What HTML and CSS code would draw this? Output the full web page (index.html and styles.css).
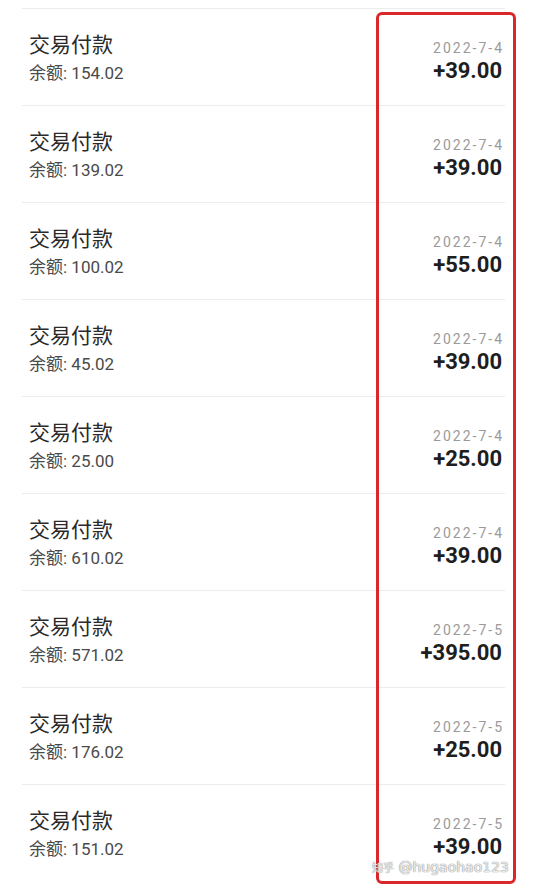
FILE: index.html
```html
<!DOCTYPE html>
<html lang="zh">
<head>
<meta charset="utf-8">
<link rel="stylesheet" href="styles.css">
</head>
<body>
<div class="page">
  <ul class="list">
    <li class="row"><div class="info"><div class="title">交易付款</div><div class="bal">余额: 154.02</div></div><div class="meta"><div class="date">2022-7-4</div><div class="amt">+39.00</div></div></li>
    <li class="row"><div class="info"><div class="title">交易付款</div><div class="bal">余额: 139.02</div></div><div class="meta"><div class="date">2022-7-4</div><div class="amt">+39.00</div></div></li>
    <li class="row"><div class="info"><div class="title">交易付款</div><div class="bal">余额: 100.02</div></div><div class="meta"><div class="date">2022-7-4</div><div class="amt">+55.00</div></div></li>
    <li class="row"><div class="info"><div class="title">交易付款</div><div class="bal">余额: 45.02</div></div><div class="meta"><div class="date">2022-7-4</div><div class="amt">+39.00</div></div></li>
    <li class="row"><div class="info"><div class="title">交易付款</div><div class="bal">余额: 25.00</div></div><div class="meta"><div class="date">2022-7-4</div><div class="amt">+25.00</div></div></li>
    <li class="row"><div class="info"><div class="title">交易付款</div><div class="bal">余额: 610.02</div></div><div class="meta"><div class="date">2022-7-4</div><div class="amt">+39.00</div></div></li>
    <li class="row"><div class="info"><div class="title">交易付款</div><div class="bal">余额: 571.02</div></div><div class="meta"><div class="date">2022-7-5</div><div class="amt">+395.00</div></div></li>
    <li class="row"><div class="info"><div class="title">交易付款</div><div class="bal">余额: 176.02</div></div><div class="meta"><div class="date">2022-7-5</div><div class="amt">+25.00</div></div></li>
    <li class="row"><div class="info"><div class="title">交易付款</div><div class="bal">余额: 151.02</div></div><div class="meta"><div class="date">2022-7-5</div><div class="amt">+39.00</div></div></li>
  </ul>
  <div class="highlight"></div>
  <div class="watermark"><span class="wm-logo">知乎</span> @hugaohao123</div>
</div>
</body>
</html>
```

FILE: styles.css
```css
html, body {
  margin: 0;
  padding: 0;
  background: #ffffff;
}
.page {
  position: relative;
  width: 546px;
  height: 888px;
  overflow: hidden;
  font-family: "Roboto", "Noto Sans CJK SC", sans-serif;
}
.list {
  list-style: none;
  margin: 0;
  padding: 8px 41px 0 22px;
}
.row {
  display: flex;
  justify-content: space-between;
  align-items: flex-start;
  height: 96px;
  border-top: 1px solid #ececec;
}
.info {
  padding: 20px 0 0 7px;
}
.title {
  font-family: "Noto Sans CJK SC", sans-serif;
  font-size: 21px;
  line-height: 29px;
  color: #2a2a2a;
}
.bal {
  font-family: "Roboto", "Noto Sans CJK SC", sans-serif;
  font-size: 17px;
  line-height: 22px;
  margin-top: 4px;
  color: #4a4a4a;
}
.meta {
  padding: 31px 3px 0 0;
  text-align: right;
}
.date {
  font-size: 14px;
  line-height: 16px;
  letter-spacing: 2px;
  color: #9a9a9a;
  margin-right: -2px;
}
.amt {
  font-size: 22px;
  line-height: 24px;
  font-weight: 700;
  color: #1e1e1e;
  margin-top: 3px;
}
.highlight {
  position: absolute;
  left: 376px;
  top: 12px;
  width: 134px;
  height: 866px;
  border: 3px solid #d9272c;
  border-radius: 6px;
}
.watermark {
  position: absolute;
  left: 372px;
  top: 859px;
  line-height: 16px;
  font-family: "DejaVu Sans", "Noto Sans CJK SC", sans-serif;
  font-size: 14px;
  color: rgba(255, 255, 255, 0.85);
  text-shadow: 0 0 1px #888, 0 0 1px #888;
  white-space: nowrap;
}
.wm-logo {
  font-size: 11px;
}
```
